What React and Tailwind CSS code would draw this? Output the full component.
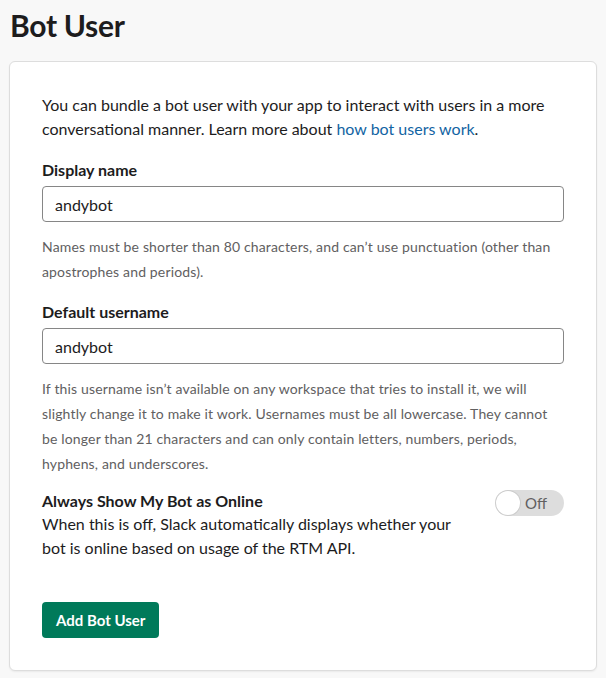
import React from "react";

const Field = ({ label, value, help, last }) => (
  <div className={last ? "" : "mb-[17px]"}>
    <label className="block text-[16px] font-bold leading-[22px] mb-[5px] text-[#1d1c1d]">
      {label}
    </label>
    <input
      readOnly
      value={value}
      className="block w-full h-9 px-3 rounded border border-[#868686] bg-white text-[16px] text-[#1d1c1d] outline-none"
      style={{ fontFamily: "Lato, sans-serif" }}
    />
    <p className="mt-[13px] text-[14px] leading-[24.7px] tracking-[0.15px] text-[#616061]">
      {help}
    </p>
  </div>
);

const App = () => {
  return (
    <div
      className="min-h-screen bg-[#f8f8f8] pb-2 text-[#1d1c1d]"
      style={{ fontFamily: "Lato, 'Noto Sans', sans-serif" }}
    >
      {/* Header */}
      <h1 className="pl-[10px] pt-[7px] pb-[18px] text-[30px] font-bold leading-[36px] tracking-[-0.3px]">
        Bot User
      </h1>

      {/* Card */}
      <div className="mx-[9px] rounded-md border border-[#dddddd] bg-white px-8 pt-[31px] pb-8 shadow-[0_1px_2px_rgba(0,0,0,0.06)]">
        <p className="text-[16px] leading-6 mb-[18px]">
          You can bundle a bot user with your app to interact with users in a more
          conversational manner. Learn more about{" "}
          <a href="#" className="text-[#1264a3]">
            how bot users work
          </a>
          .
        </p>

        <Field
          label="Display name"
          value="andybot"
          help="Names must be shorter than 80 characters, and can’t use punctuation (other than apostrophes and periods)."
        />
        <Field
          label="Default username"
          value="andybot"
          help="If this username isn’t available on any workspace that tries to install it, we will slightly change it to make it work. Usernames must be all lowercase. They cannot be longer than 21 characters and can only contain letters, numbers, periods, hyphens, and underscores."
          last
        />

        {/* Always online toggle */}
        <div className="mt-[14px] flex items-start justify-between">
          <div className="max-w-[420px]">
            <div className="text-[16px] font-bold leading-[22px]">
              Always Show My Bot as Online
            </div>
            <p className="text-[16px] leading-6">
              When this is off, Slack automatically displays whether your bot is
              online based on usage of the RTM API.
            </p>
          </div>
          <div className="flex h-[26px] w-[69px] shrink-0 items-center rounded-full bg-[#dddddd]">
            <span className="h-[24px] w-[24px] ml-px rounded-full bg-white shadow-[0_0_0_1px_rgba(0,0,0,0.08)]" />
            <span className="ml-[5px] text-[15px] text-[#616061]">Off</span>
          </div>
        </div>

        <button className="mt-[42px] h-9 rounded bg-[#007a5a] px-[14px] text-[15px] font-bold text-white">
          Add Bot User
        </button>
      </div>
    </div>
  );
};

export default App;
